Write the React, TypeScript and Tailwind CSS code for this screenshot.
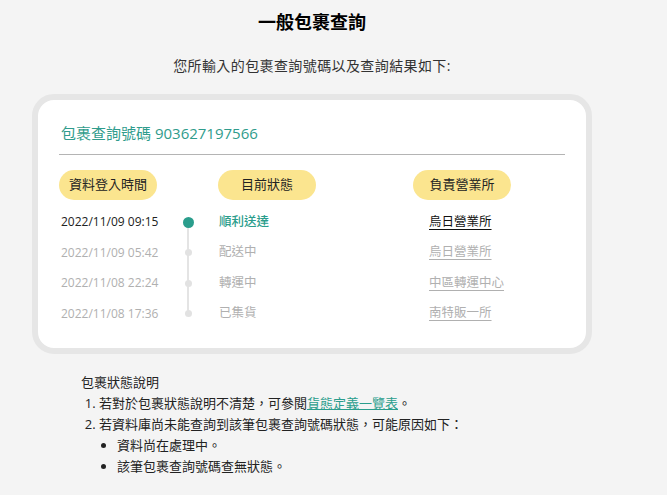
import React from "react";

type Row = { time: string; status: string; office: string };

const rows: Row[] = [
  { time: "2022/11/09 09:15", status: "順利送達", office: "烏日營業所" },
  { time: "2022/11/09 05:42", status: "配送中", office: "烏日營業所" },
  { time: "2022/11/08 22:24", status: "轉運中", office: "中區轉運中心" },
  { time: "2022/11/08 17:36", status: "已集貨", office: "南特販一所" },
];

const font = { fontFamily: '"Open Sans", "Noto Sans CJK TC", sans-serif' };

function Pill({ children }: { children: React.ReactNode }) {
  return (
    <div className="flex h-[30px] w-[98px] items-center justify-center rounded-full bg-[#fbe58f] text-[13px] text-[#222]">
      {children}
    </div>
  );
}

export default function App() {
  return (
    <div className="min-h-[495px] bg-[#f4f4f4] text-[#333]" style={font}>
      <div className="ml-[32px] w-[560px]">
        <h1 className="pt-[9px] text-center text-[18px] font-bold leading-[26px] text-black">
          一般包裹查詢
        </h1>
        <p className="mt-[20px] text-center text-[14px] leading-[22px] tracking-[0.4px] text-[#333]">
          您所輸入的包裹查詢號碼以及查詢結果如下:
        </p>

        <div className="mt-[17px] h-[260px] rounded-[22px] border-[6px] border-[#e6e6e6] bg-white pl-[21px] pr-[21px]">
          <div className="pl-[2px] pt-[22px] text-[15px] leading-[22px] text-[#2f9c8c]">
            包裹查詢號碼 903627197566
          </div>
          <div className="mt-[10px] h-px bg-[#b4b4b4]" />

          <div className="mt-[15px] flex">
            <div className="w-[159px]">
              <Pill>資料登入時間</Pill>
            </div>
            <div className="w-[195px]">
              <Pill>目前狀態</Pill>
            </div>
            <Pill>負責營業所</Pill>
          </div>

          <div className="mt-[7px]">
            {rows.map((r, i) => {
              const first = i === 0;
              const last = i === rows.length - 1;
              return (
                <div key={r.time} className="flex h-[30.5px] items-center text-[12.5px]">
                  <div
                    className={`w-[114px] pl-[2px] text-[12px] ${first ? "text-[#222]" : "text-[#b0b0b0]"}`}
                  >
                    {r.time}
                  </div>
                  <div className="relative flex h-full w-[30px] items-center justify-center">
                    {!first && (
                      <div className="absolute left-[14px] top-0 h-1/2 w-[2px] bg-[#e4e4e4]" />
                    )}
                    {!last && (
                      <div className="absolute bottom-0 left-[14px] h-1/2 w-[2px] bg-[#e4e4e4]" />
                    )}
                    {first ? (
                      <div className="relative h-[11px] w-[11px] rounded-full bg-[#2a9d8c]" />
                    ) : (
                      <div className="relative h-[7px] w-[7px] rounded-full bg-[#e2e2e2]" />
                    )}
                  </div>
                  <div
                    className={`w-[226px] pl-[16px] ${first ? "font-medium text-[#2a9d8c]" : "text-[#b0b0b0]"}`}
                  >
                    {r.status}
                  </div>
                  <a
                    href="#"
                    className={`underline underline-offset-[3px] ${first ? "text-[#111]" : "text-[#b0b0b0]"}`}
                  >
                    {r.office}
                  </a>
                </div>
              );
            })}
          </div>
        </div>

        <div className="ml-[49px] mt-[18px] text-[13px] leading-[21px] text-[#222]">
          <div>包裹狀態說明</div>
          <ol className="list-decimal pl-[18px]">
            <li>
              若對於包裹狀態說明不清楚，可參閱
              <a href="#" className="text-[#2a9d8c] underline">
                貨態定義一覽表
              </a>
              。
            </li>
            <li>
              若資料庫尚未能查詢到該筆包裹查詢號碼狀態，可能原因如下：
              <ul className="list-disc pl-[18px]">
                <li>資料尚在處理中。</li>
                <li>該筆包裹查詢號碼查無狀態。</li>
              </ul>
            </li>
          </ol>
        </div>
      </div>
    </div>
  );
}
